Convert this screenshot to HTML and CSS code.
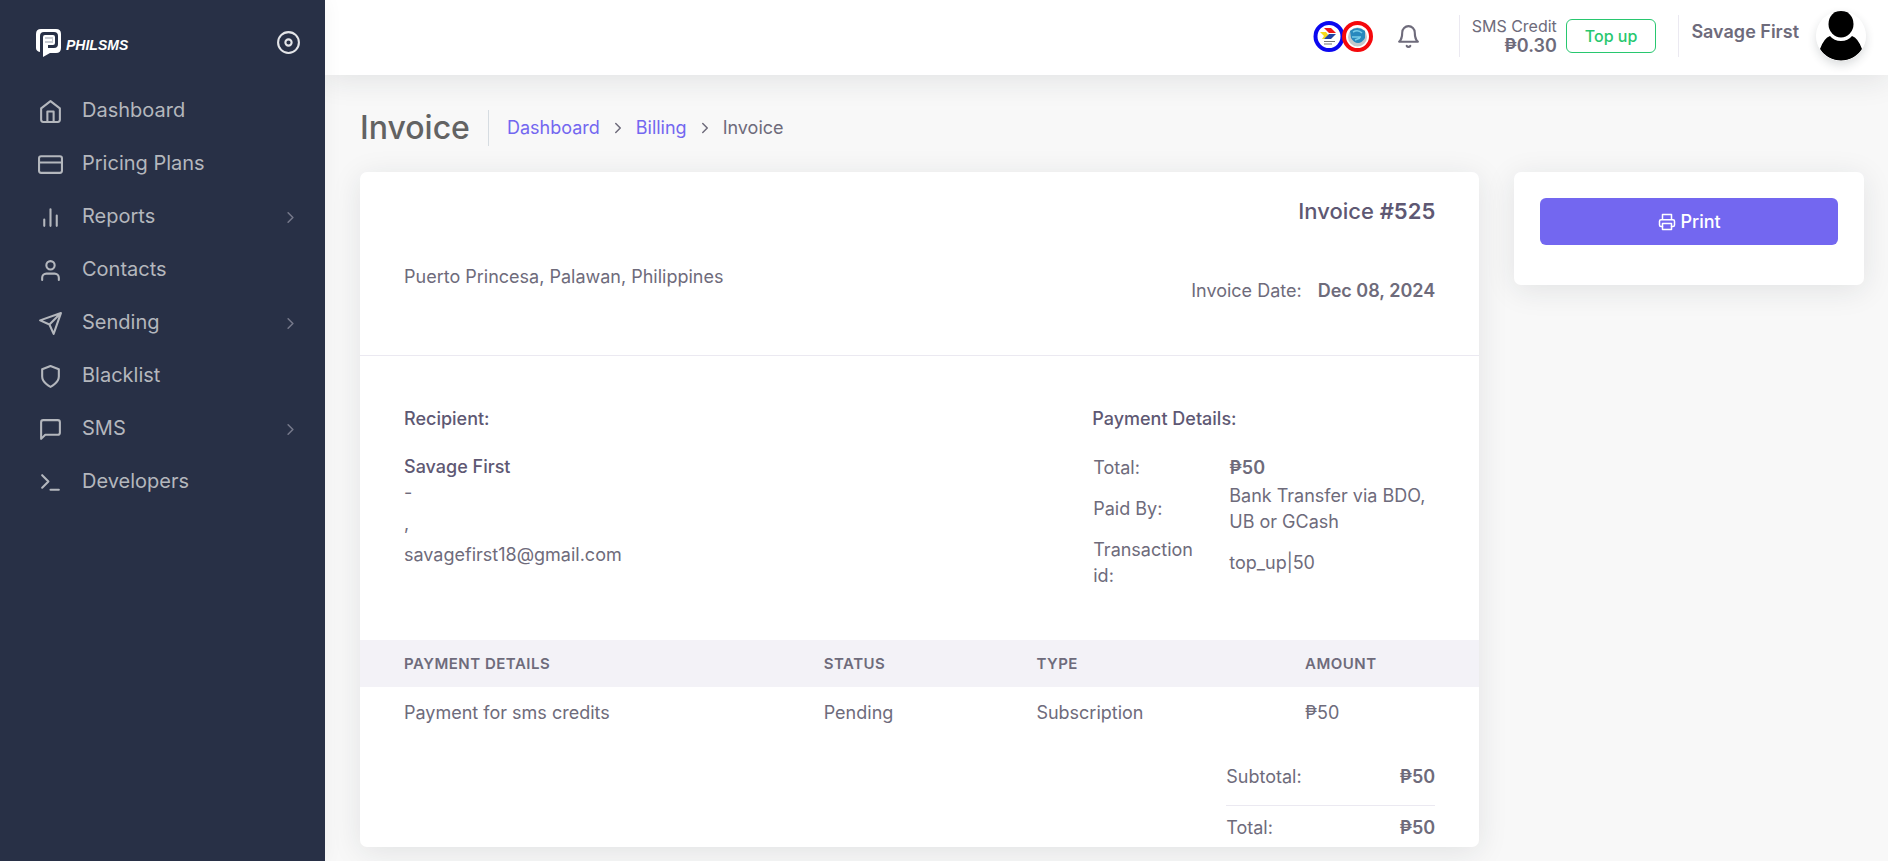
FILE: index.html
```html
<!DOCTYPE html>
<html lang="en">
<head>
<meta charset="utf-8">
<meta name="viewport" content="width=device-width, initial-scale=1">
<title>Invoice - PhilSMS</title>
<link rel="stylesheet" href="styles.css">
</head>
<body>
<svg class="sprite" aria-hidden="true">
  <symbol id="chevron" viewBox="0 0 24 24"><path d="M9 18l6-6-6-6"/></symbol>
</svg>
<div class="app">
  <aside class="sidebar">
    <div class="brand">
      <a class="brand-link" href="#" aria-label="PhilSMS">
        <svg class="brand-logo" viewBox="0 0 100 30">
          <path d="M5 1H20Q25 1 25 6V20Q25 25 20 25H14L7 29V9Q7 7 9 7H17Q19 7 19 9V15Q19 17 17 17H12V20H18Q22 20 22 16V8Q22 4 18 4H8Q4 4 4 8V24Q0 23 0 20V6Q0 1 5 1Z" fill="#fff" fill-rule="evenodd"/>
          <path d="M9 9H17V15H9Z" fill="#c9ccd3"/>
          <path d="M9 12H16" stroke="#fff" stroke-width="2"/>
          <text class="brand-name" x="30" y="22">PHILSMS</text>
        </svg>
      </a>
      <button class="icon-button" type="button" aria-label="Collapse menu">
        <svg class="icon disc" viewBox="0 0 24 24"><circle cx="12" cy="12" r="10"/><circle cx="12" cy="12" r="3"/></svg>
      </button>
    </div>
    <nav class="menu">
      <a class="menu-item" href="#"><svg class="icon" viewBox="0 0 24 24"><path d="M3 9l9-7 9 7v11a2 2 0 0 1-2 2H5a2 2 0 0 1-2-2z"/><path d="M9 22V12h6v10"/></svg><span class="menu-label">Dashboard</span></a>
      <a class="menu-item" href="#"><svg class="icon" viewBox="0 0 24 24"><rect x="1" y="4" width="22" height="16" rx="2"/><path d="M1 10h22"/></svg><span class="menu-label">Pricing Plans</span></a>
      <a class="menu-item" href="#"><svg class="icon" viewBox="0 0 24 24"><path d="M18 20V10M12 20V4M6 20v-6"/></svg><span class="menu-label">Reports</span><svg class="icon caret"><use href="#chevron"/></svg></a>
      <a class="menu-item" href="#"><svg class="icon" viewBox="0 0 24 24"><path d="M20 21v-2a4 4 0 0 0-4-4H8a4 4 0 0 0-4 4v2"/><circle cx="12" cy="7" r="4"/></svg><span class="menu-label">Contacts</span></a>
      <a class="menu-item" href="#"><svg class="icon" viewBox="0 0 24 24"><path d="M22 2L11 13M22 2l-7 20-4-9-9-4z"/></svg><span class="menu-label">Sending</span><svg class="icon caret"><use href="#chevron"/></svg></a>
      <a class="menu-item" href="#"><svg class="icon" viewBox="0 0 24 24"><path d="M12 22s8-4 8-10V5l-8-3-8 3v7c0 6 8 10 8 10z"/></svg><span class="menu-label">Blacklist</span></a>
      <a class="menu-item" href="#"><svg class="icon" viewBox="0 0 24 24"><path d="M21 15a2 2 0 0 1-2 2H7l-4 4V5a2 2 0 0 1 2-2h14a2 2 0 0 1 2 2z"/></svg><span class="menu-label">SMS</span><svg class="icon caret"><use href="#chevron"/></svg></a>
      <a class="menu-item" href="#"><svg class="icon" viewBox="0 0 24 24"><path d="M4 17l6-6-6-6M12 19h8"/></svg><span class="menu-label">Developers</span></a>
    </nav>
  </aside>

  <div class="page">
    <header class="topbar">
      <svg class="partners" viewBox="0 0 60 33" role="img" aria-label="Partner networks">
        <circle cx="16" cy="16.500" r="13.500" fill="#fff" stroke="#0b08f0" stroke-width="4"/>
        <path d="M11 8h7l5 5h-7z" fill="#f01818"/>
        <path d="M7 12h6l3 4-5 3H9l2-3z" fill="#f5dc1a"/><path d="M16 14h7l-5 5h-7z" fill="#2444a4"/>
        <path d="M11 21.500h11M11 24h8" stroke="#777" stroke-width="1.200"/>
        <circle cx="44.500" cy="16.500" r="13.500" fill="#fff" stroke="#f5080c" stroke-width="4"/>
        <circle cx="44.500" cy="17" r="9.500" fill="#c3c8cc"/>
        <path d="M37 11q7-6 15 0v7q-3 5-7 5t-7-5z" fill="#2788bd"/>
        <path d="M40 12q5-3 9 1M39 17h9M42 20l5-2" stroke="#78cce8" stroke-width="1.500" fill="none"/>
      </svg>
      <button class="icon-button bell" type="button" aria-label="Notifications">
        <svg class="icon" viewBox="0 0 24 24"><path d="M18 8A6 6 0 0 0 6 8c0 7-3 9-3 9h18s-3-2-3-9M13.730 21a2 2 0 0 1-3.460 0"/></svg>
      </button>
      <div class="credit">
        <div class="credit-text"><span class="credit-label">SMS Credit</span><strong class="credit-value">₱0.30</strong></div>
        <button class="topup" type="button">Top up</button>
      </div>
      <a class="user" href="#">
        <span class="user-name">Savage First</span>
        <svg class="avatar" viewBox="0 0 50 50" aria-hidden="true"><circle cx="25" cy="25" r="25" fill="#fff"/><ellipse cx="25" cy="13" rx="12.500" ry="13.500"/><path d="M14 25Q18 30 25 30T36 25Q42 27 46 38A25 25 0 0 1 4 38Q8 27 14 25Z"/></svg>
      </a>
    </header>

    <main class="content">
      <div class="heading">
        <h1 class="title">Invoice</h1>
        <nav class="crumbs" aria-label="Breadcrumb">
          <a href="#">Dashboard</a><svg class="icon crumb-sep"><use href="#chevron"/></svg>
          <a href="#">Billing</a><svg class="icon crumb-sep"><use href="#chevron"/></svg>
          <span>Invoice</span>
        </nav>
      </div>
      <div class="columns">
        <section class="card invoice">
          <div class="invoice-head">
            <p class="address">Puerto Princesa, Palawan, Philippines</p>
            <div class="invoice-meta">
              <h2 class="invoice-number">Invoice <strong>#525</strong></h2>
              <p class="invoice-date"><span>Invoice Date:</span><strong>Dec 08, 2024</strong></p>
            </div>
          </div>
          <div class="parties">
            <div class="recipient">
              <h3 class="subhead">Recipient:</h3>
              <h3 class="recipient-name">Savage First</h3>
              <p class="line">-</p>
              <p class="line">,</p>
              <p class="line">savagefirst18@gmail.com</p>
            </div>
            <div class="payment">
              <h3 class="subhead">Payment Details:</h3>
              <table class="payment-table">
                <tbody>
                  <tr><th scope="row">Total:</th><td><strong>₱50</strong></td></tr>
                  <tr><th scope="row">Paid By:</th><td>Bank Transfer via BDO, UB or GCash</td></tr>
                  <tr><th scope="row">Transaction id:</th><td>top_up|50</td></tr>
                </tbody>
              </table>
            </div>
          </div>
          <table class="items">
            <thead><tr><th scope="col" class="col-details">Payment Details</th><th scope="col" class="col-status">Status</th><th scope="col" class="col-type">Type</th><th scope="col">Amount</th></tr></thead>
            <tbody><tr><td>Payment for sms credits</td><td>Pending</td><td>Subscription</td><td>₱50</td></tr></tbody>
          </table>
          <div class="totals">
            <p class="total-row"><span>Subtotal:</span><strong>₱50</strong></p>
            <hr class="total-rule">
            <p class="total-row"><span>Total:</span><strong>₱50</strong></p>
          </div>
        </section>
        <aside class="card actions">
          <button class="print" type="button"><svg class="icon" viewBox="0 0 24 24"><path d="M6 9V2h12v7M6 18H4a2 2 0 0 1-2-2v-5a2 2 0 0 1 2-2h16a2 2 0 0 1 2 2v5a2 2 0 0 1-2 2h-2"/><path d="M6 14h12v8H6z"/></svg>Print</button>
        </aside>
      </div>
    </main>
  </div>
</div>
</body>
</html>
```
FILE: styles.css
```css
* { box-sizing: border-box; }

body {
  margin: 0;
  background: #f8f8f8;
  color: #6e6b7b;
  font-family: Inter, "Noto Sans", sans-serif;
  font-size: 18px;
  line-height: 26px;
}

h1, h2, h3, p { margin: 0; }
a { color: #7367f0; text-decoration: none; }
button { font-family: inherit; cursor: pointer; }
strong { font-weight: 600; }

.sprite { position: absolute; width: 0; height: 0; }

.icon {
  flex: none;
  width: 25px;
  height: 25px;
  fill: none;
  stroke: currentColor;
  stroke-width: 2;
  stroke-linecap: round;
  stroke-linejoin: round;
}

.icon-button {
  display: flex;
  padding: 0;
  border: 0;
  background: none;
  color: inherit;
}

.app { display: flex; min-height: 100vh; }

/* Sidebar */
.sidebar {
  position: relative;
  z-index: 2;
  flex: none;
  width: 325px;
  background: #283046;
  color: #b4b7bd;
  box-shadow: 0 0 19px rgba(34, 41, 47, 0.05);
}

.brand {
  display: flex;
  align-items: center;
  justify-content: space-between;
  height: 85px;
  padding: 0 24px 0 36px;
}

.brand-link { display: flex; }
.brand-logo { width: 100px; height: 30px; }
.brand-name {
  fill: #fff;
  font-family: "Liberation Sans Narrow", "Liberation Sans", sans-serif;
  font-size: 14px;
  font-style: italic;
  font-weight: 700;
}
.disc { color: #e4e5e8; }

.menu-item {
  display: flex;
  align-items: center;
  gap: 19px;
  height: 53px;
  padding: 0 25px 0 38px;
  color: inherit;
  font-size: 20px;
}
.menu-label { flex: 1; padding-bottom: 4px; }
.caret { width: 19px; height: 19px; color: #75788a; }

/* Top bar */
.page { flex: 1; min-width: 0; }

.topbar {
  display: flex;
  align-items: center;
  justify-content: flex-end;
  height: 75px;
  padding: 0 22px 3px;
  background: #fff;
  box-shadow: 0 5px 30px rgba(34, 41, 47, 0.1);
}
.partners { width: 60px; height: 33px; }
.bell { margin: 0 38px 0 23px; }

.credit {
  display: flex;
  align-items: center;
  gap: 9px;
  height: 42px;
  padding: 0 22px 0 12px;
  border-left: 1px solid #ebe9f1;
}
.credit-text { display: flex; flex-direction: column; text-align: right; }
.credit-label { font-size: 16px; line-height: 20px; }
.credit-value { line-height: 20px; }

.topup {
  height: 34px;
  padding: 0 18px;
  border: 1px solid #28c76f;
  border-radius: 6px;
  background: #fff;
  color: #28c76f;
  font-size: 16px;
  font-weight: 500;
}

.user {
  display: flex;
  align-items: center;
  gap: 17px;
  height: 42px;
  padding-left: 12px;
  border-left: 1px solid #ebe9f1;
  color: inherit;
  font-weight: 600;
}
.user-name { padding-bottom: 8px; }
.avatar {
  width: 50px;
  height: 50px;
  border-radius: 50%;
  box-shadow: 0 4px 10px rgba(34, 41, 47, 0.16);
}

/* Content */
.content { padding: 35px 24px 14px 35px; }

.heading { display: flex; align-items: center; height: 36px; margin-bottom: 26px; }
.title {
  padding-right: 18px;
  border-right: 1px solid #d6dce1;
  color: #636363;
  font-size: 32px;
  font-weight: 500;
  line-height: 36px;
}
.crumbs { display: flex; align-items: center; gap: 9px; padding-left: 18px; }
.crumb-sep { width: 18px; height: 18px; }

.columns {
  display: grid;
  grid-template-columns: repeat(12, minmax(0, 1fr));
  gap: 35px;
  align-items: start;
}

.card {
  border-radius: 7px;
  background: #fff;
  box-shadow: 0 5px 30px rgba(34, 41, 47, 0.1);
}
.invoice { grid-column: span 9; }
.actions { grid-column: span 3; padding: 26px 26px 40px; }

.print {
  display: flex;
  align-items: center;
  justify-content: center;
  gap: 5px;
  width: 100%;
  height: 47px;
  border: 0;
  border-radius: 6px;
  background: #7367f0;
  color: #fff;
  font-size: 18px;
  font-weight: 500;
}
.print .icon { width: 18px; height: 18px; }

.invoice-head {
  display: flex;
  justify-content: space-between;
  padding: 26px 44px 51px;
  border-bottom: 1px solid #ebe9f1;
}
.address { padding-top: 66px; }
.invoice-number {
  margin-bottom: 54px;
  color: #5e5873;
  font-size: 22px;
  font-weight: 500;
  text-align: right;
}
.invoice-date { display: flex; justify-content: flex-end; gap: 16px; }

.parties {
  display: flex;
  justify-content: space-between;
  padding: 50px 44px;
}
.subhead, .recipient-name { color: #5e5873; font-size: 18px; font-weight: 500; }
.subhead { margin-bottom: 22px; }
.line { margin-bottom: 5px; }

.payment { width: 343px; }
.payment-table { width: 100%; border-collapse: collapse; }
.payment-table th, .payment-table td { padding: 1px; font-weight: 400; text-align: left; }
.payment-table th { width: 136px; padding-right: 24px; }

.items { width: 100%; border-collapse: collapse; text-align: left; }
.items th {
  height: 47px;
  padding: 0 0 0 44px;
  background: #f3f2f7;
  font-size: 15px;
  font-weight: 600;
  letter-spacing: 0.5px;
  text-transform: uppercase;
}
.items td { height: 52px; padding: 0 0 0 44px; }
.col-details { width: 37.5%; }
.col-status { width: 19%; }
.col-type { width: 24%; }

.totals { width: 253px; margin-left: auto; padding: 25px 44px 6px 0; }
.total-row { display: flex; justify-content: space-between; }
.total-rule { margin: 15px 0 9px; border: 0; border-top: 1px solid #ebe9f1; }
```
